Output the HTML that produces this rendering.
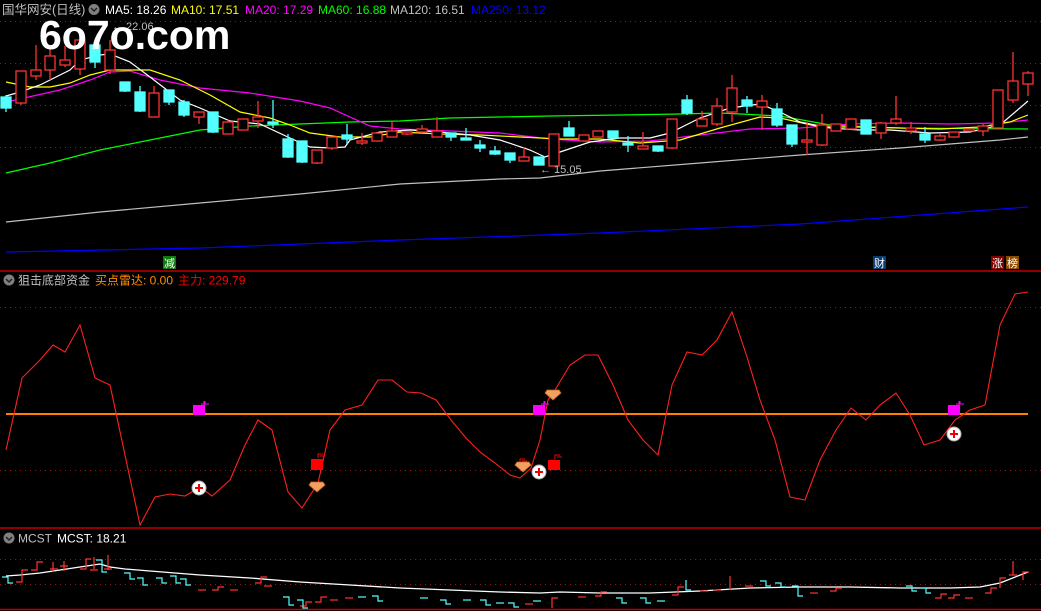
<!DOCTYPE html>
<html><head><meta charset="utf-8"><style>
html,body{margin:0;padding:0;background:#000;width:1041px;height:611px;overflow:hidden}
svg{display:block}
text{font-family:"Liberation Sans","Noto Sans CJK SC",sans-serif}
</style></head><body>
<svg width="1041" height="611" viewBox="0 0 1041 611" xmlns="http://www.w3.org/2000/svg">
<rect width="1041" height="611" fill="#000"/>
<g stroke="#8b1a1a" stroke-width="1" stroke-dasharray="1,4">
<line x1="0" y1="21.5" x2="1041" y2="21.5"/>
<line x1="0" y1="63.5" x2="1041" y2="63.5"/>
<line x1="0" y1="105.5" x2="1041" y2="105.5"/>
<line x1="0" y1="147.5" x2="1041" y2="147.5"/>
<line x1="0" y1="307.5" x2="1041" y2="307.5"/>
<line x1="0" y1="470.5" x2="1041" y2="470.5"/>
<line x1="0" y1="559.5" x2="1041" y2="559.5"/>
<line x1="0" y1="584.5" x2="1041" y2="584.5"/>
</g>
<g stroke="#c00000" stroke-width="1.5">
<line x1="0" y1="271" x2="1041" y2="271"/>
<line x1="0" y1="528" x2="1041" y2="528"/>
<line x1="0" y1="609.5" x2="1041" y2="609.5"/>
</g>
<text x="2" y="14" font-size="12.5" fill="#c0c0c0">国华网安(日线)</text>
<circle cx="94" cy="9.5" r="5.5" fill="#808080"/><path d="M91 8 L94 11 L97 8" stroke="#222" stroke-width="1.5" fill="none"/>
<text x="105" y="14" font-size="12" fill="#fff">MA5: 18.26</text>
<text x="171" y="14" font-size="12" fill="#ffff00">MA10: 17.51</text>
<text x="245" y="14" font-size="12" fill="#ff00ff">MA20: 17.29</text>
<text x="318" y="14" font-size="12" fill="#00ff00">MA60: 16.88</text>
<text x="390" y="14" font-size="12" fill="#c0c0c0">MA120: 16.51</text>
<text x="471" y="14" font-size="12" fill="#0000ff">MA250: 13.12</text>
<g fill="none" stroke-width="1.2">
<polyline stroke="#0000ff" points="6,252 200,248 400,240 600,233 800,224 1028,207"/>
<polyline stroke="#c0c0c0" points="6,222 100,212 200,203 300,194 400,184 500,179 540,178 600,171 700,163 800,155 900,148 1000,140 1028,137"/>
<polyline stroke="#00ff00" points="6,173 50,163 100,150 150,140 200,130 250,126 300,124 350,122 400,121 450,118 500,117 550,116 620,115 680,114 720,113 780,116 830,125 870,127 900,128 1028,129"/>
<polyline stroke="#ff00ff" points="6,102 60,90 90,80 110,72 130,71 160,80 200,88 250,93 300,101 330,108 370,126 400,129 450,131 500,133 550,139 600,142 650,141 700,135 750,129 800,128 850,124 900,123 950,124 1000,123 1028,120"/>
<polyline stroke="#ffff00" points="6,82 30,87 50,87 70,83 90,75 110,70 150,70 180,80 210,95 240,112 270,118 290,125 310,133 340,137 370,137 400,132 440,134 480,135 520,137 560,139 600,139 640,143 680,140 720,128 760,117 780,118 820,127 860,127 900,128 940,129 980,127 1010,122 1028,115"/>
<polyline stroke="#ffffff" points="6,96 20,92 40,85 70,70 80,60 100,55 110,54 130,62 150,77 180,100 200,108 230,121 260,124 290,138 310,147 330,148 345,147 350,140 380,132 410,130 440,132 470,135 500,140 530,150 545,157 560,152 590,142 620,138 650,138 670,133 700,118 730,108 760,104 780,112 800,122 830,128 860,130 890,130 930,133 970,132 1000,125 1028,101"/>
</g>
<g stroke-width="1.3">
<g stroke="#54ffff" fill="#54ffff">
<line x1="6" y1="95" x2="6" y2="112"/><rect x="1" y="97" width="10" height="11"/>
<line x1="95" y1="45" x2="95" y2="68"/><rect x="90" y="45" width="10" height="17"/>
<line x1="125" y1="82" x2="125" y2="92"/><rect x="120" y="82" width="10" height="9"/>
<line x1="140" y1="86" x2="140" y2="112"/><rect x="135" y="92" width="10" height="19"/>
<line x1="169" y1="90" x2="169" y2="105"/><rect x="164" y="90" width="10" height="12"/>
<line x1="184" y1="100" x2="184" y2="117"/><rect x="179" y="102" width="10" height="13"/>
<line x1="213" y1="112" x2="213" y2="133"/><rect x="208" y="112" width="10" height="20"/>
<line x1="273" y1="100" x2="273" y2="128"/><rect x="268" y="122" width="10" height="2"/>
<line x1="288" y1="134" x2="288" y2="158"/><rect x="283" y="139" width="10" height="18"/>
<line x1="302" y1="141" x2="302" y2="163"/><rect x="297" y="141" width="10" height="21"/>
<line x1="347" y1="124" x2="347" y2="144"/><rect x="342" y="135" width="10" height="4"/>
<line x1="451" y1="133" x2="451" y2="141"/><rect x="446" y="133" width="10" height="4"/>
<line x1="466" y1="128" x2="466" y2="140"/><rect x="461" y="138" width="10" height="2"/>
<line x1="480" y1="140" x2="480" y2="152"/><rect x="475" y="145" width="10" height="3"/>
<line x1="495" y1="146" x2="495" y2="155"/><rect x="490" y="151" width="10" height="3"/>
<line x1="510" y1="153" x2="510" y2="163"/><rect x="505" y="153" width="10" height="7"/>
<line x1="539" y1="157" x2="539" y2="165"/><rect x="534" y="157" width="10" height="8"/>
<line x1="569" y1="121" x2="569" y2="136"/><rect x="564" y="128" width="10" height="8"/>
<line x1="613" y1="131" x2="613" y2="138"/><rect x="608" y="131" width="10" height="7"/>
<line x1="628" y1="136" x2="628" y2="152"/><rect x="623" y="143" width="10" height="2"/>
<line x1="658" y1="146" x2="658" y2="152"/><rect x="653" y="146" width="10" height="5"/>
<line x1="687" y1="95" x2="687" y2="115"/><rect x="682" y="100" width="10" height="13"/>
<line x1="747" y1="96" x2="747" y2="113"/><rect x="742" y="100" width="10" height="6"/>
<line x1="777" y1="103" x2="777" y2="127"/><rect x="772" y="109" width="10" height="16"/>
<line x1="792" y1="125" x2="792" y2="147"/><rect x="787" y="125" width="10" height="19"/>
<line x1="866" y1="120" x2="866" y2="134"/><rect x="861" y="120" width="10" height="14"/>
<line x1="925" y1="127" x2="925" y2="143"/><rect x="920" y="134" width="10" height="6"/>
</g>
<g stroke="#ff3232" fill="#000">
<line x1="21" y1="71" x2="21" y2="105"/><rect x="16" y="71" width="10" height="32"/>
<line x1="36" y1="45" x2="36" y2="80"/><rect x="31" y="70" width="10" height="6"/>
<line x1="50" y1="45" x2="50" y2="80"/><rect x="45" y="56" width="10" height="14"/>
<line x1="65" y1="46" x2="65" y2="67"/><rect x="60" y="60" width="10" height="5"/>
<line x1="80" y1="40" x2="80" y2="75"/><rect x="75" y="40" width="10" height="29"/>
<line x1="110" y1="40" x2="110" y2="74"/><rect x="105" y="50" width="10" height="20"/>
<line x1="154" y1="86" x2="154" y2="117"/><rect x="149" y="93" width="10" height="24"/>
<line x1="199" y1="112" x2="199" y2="124"/><rect x="194" y="112" width="10" height="5"/>
<line x1="228" y1="120" x2="228" y2="134"/><rect x="223" y="122" width="10" height="12"/>
<line x1="243" y1="119" x2="243" y2="130"/><rect x="238" y="119" width="10" height="11"/>
<line x1="258" y1="101" x2="258" y2="128"/><rect x="253" y="117" width="10" height="4"/>
<line x1="317" y1="150" x2="317" y2="164"/><rect x="312" y="150" width="10" height="13"/>
<line x1="332" y1="137" x2="332" y2="150"/><rect x="327" y="137" width="10" height="11"/>
<line x1="362" y1="133" x2="362" y2="145"/><rect x="357" y="141" width="10" height="2"/>
<line x1="377" y1="133" x2="377" y2="141"/><rect x="372" y="133" width="10" height="8"/>
<line x1="392" y1="122" x2="392" y2="137"/><rect x="387" y="131" width="10" height="6"/>
<line x1="407" y1="132" x2="407" y2="135"/><rect x="402" y="132" width="10" height="2"/>
<line x1="422" y1="125" x2="422" y2="133"/><rect x="417" y="129" width="10" height="3"/>
<line x1="437" y1="117" x2="437" y2="137"/><rect x="432" y="131" width="10" height="6"/>
<line x1="524" y1="147" x2="524" y2="161"/><rect x="519" y="157" width="10" height="4"/>
<line x1="554" y1="134" x2="554" y2="166"/><rect x="549" y="134" width="10" height="32"/>
<line x1="584" y1="135" x2="584" y2="141"/><rect x="579" y="135" width="10" height="6"/>
<line x1="598" y1="131" x2="598" y2="137"/><rect x="593" y="131" width="10" height="6"/>
<line x1="643" y1="132" x2="643" y2="149"/><rect x="638" y="146" width="10" height="3"/>
<line x1="672" y1="119" x2="672" y2="149"/><rect x="667" y="119" width="10" height="29"/>
<line x1="702" y1="111" x2="702" y2="126"/><rect x="697" y="119" width="10" height="7"/>
<line x1="717" y1="98" x2="717" y2="126"/><rect x="712" y="106" width="10" height="18"/>
<line x1="732" y1="75" x2="732" y2="122"/><rect x="727" y="88" width="10" height="24"/>
<line x1="762" y1="95" x2="762" y2="130"/><rect x="757" y="101" width="10" height="6"/>
<line x1="807" y1="122" x2="807" y2="155"/><rect x="802" y="140" width="10" height="2"/>
<line x1="822" y1="114" x2="822" y2="146"/><rect x="817" y="125" width="10" height="20"/>
<line x1="836" y1="124" x2="836" y2="131"/><rect x="831" y="124" width="10" height="7"/>
<line x1="851" y1="119" x2="851" y2="129"/><rect x="846" y="119" width="10" height="10"/>
<line x1="881" y1="122" x2="881" y2="139"/><rect x="876" y="123" width="10" height="10"/>
<line x1="896" y1="96" x2="896" y2="125"/><rect x="891" y="119" width="10" height="4"/>
<line x1="911" y1="122" x2="911" y2="134"/><rect x="906" y="128" width="10" height="3"/>
<line x1="940" y1="133" x2="940" y2="141"/><rect x="935" y="136" width="10" height="4"/>
<line x1="954" y1="132" x2="954" y2="137"/><rect x="949" y="132" width="10" height="5"/>
<line x1="969" y1="129" x2="969" y2="131"/><rect x="964" y="129" width="10" height="2"/>
<line x1="983" y1="124" x2="983" y2="136"/><rect x="978" y="126" width="10" height="5"/>
<line x1="998" y1="90" x2="998" y2="128"/><rect x="993" y="90" width="10" height="38"/>
<line x1="1013" y1="52" x2="1013" y2="103"/><rect x="1008" y="81" width="10" height="19"/>
<line x1="1028" y1="71" x2="1028" y2="96"/><rect x="1023" y="73" width="10" height="11"/>
</g>
</g>
<text x="112" y="30" font-size="11" fill="#c0c0c0">← 22.06</text>
<text x="540" y="173" font-size="11" fill="#c0c0c0">← 15.05</text>
<text x="39" y="49" font-size="41" font-weight="bold" fill="#fff">6o7o.com</text>
<rect x="163" y="256" width="13" height="13" fill="#0a7a0a"/><text x="164" y="267" font-size="11" fill="#fff">减</text>
<rect x="873" y="256" width="13" height="13" fill="#0a3a70"/><text x="874" y="267" font-size="11" fill="#fff">财</text>
<rect x="991" y="256" width="13" height="13" fill="#800000"/><text x="992" y="267" font-size="11" fill="#fff">涨</text>
<rect x="1006" y="256" width="13" height="13" fill="#8a4a00"/><text x="1007" y="267" font-size="11" fill="#fff">榜</text>
<circle cx="9" cy="280" r="5.5" fill="#808080"/><path d="M6 279 L9 282 L12 279" stroke="#222" stroke-width="1.5" fill="none"/>
<text x="18" y="284.5" font-size="12" fill="#c0c0c0">狙击底部资金</text>
<text x="95" y="284.5" font-size="12" fill="#ff8c00">买点雷达: 0.00</text>
<text x="178" y="284.5" font-size="12" fill="#ff0000">主力: 229.79</text>
<line x1="6" y1="414" x2="1028" y2="414" stroke="#ff8000" stroke-width="2"/>
<polyline fill="none" stroke="#ff2020" stroke-width="1.1" points="6,450 22,378 40,360 53,345 65,352 80,325 95,378 110,385 125,455 140,525 155,497 170,494 185,496 200,487 212,496 230,480 245,445 258,420 272,430 288,492 302,508 318,483 330,430 345,410 362,405 378,380 392,380 407,392 421,393 436,400 451,420 466,438 480,452 495,463 510,475 520,478 531,468 540,440 548,400 555,390 570,365 585,355 598,355 613,385 628,420 643,440 658,455 672,385 687,352 702,355 717,340 732,312 747,357 760,400 775,440 790,497 805,500 820,460 836,430 851,408 866,420 880,405 896,393 910,415 924,445 940,440 955,420 970,410 985,405 1000,325 1015,294 1028,292"/>
<g fill="#ff00ff"><rect x="193" y="405" width="12" height="10"/><rect x="533" y="405" width="12" height="10"/><rect x="948" y="405" width="12" height="10"/></g>
<g stroke="#ff00ff" stroke-width="1" fill="none"><path d="M201 404h4v-3M204 401v8M201 404h8"/><path d="M541 404h4v-3M544 401v8M541 404h8"/><path d="M956 404h4v-3M959 401v8M956 404h8"/></g>
<g fill="#ff0000"><rect x="311" y="459" width="12" height="11"/><rect x="548" y="460" width="12" height="10"/></g>
<g stroke="#ff0000" stroke-width="1" fill="none"><path d="M318 458v-4h5M320 456h5"/><path d="M555 459v-4h5M557 457h5"/><path d="M520 463v-4h5M522 461h5"/></g>
<circle cx="199" cy="488" r="7" fill="#fff" stroke="#aaa"/><path d="M199 484v8M195 488h8" stroke="#e00" stroke-width="2"/>
<circle cx="539" cy="472" r="7" fill="#fff" stroke="#aaa"/><path d="M539 468v8M535 472h8" stroke="#e00" stroke-width="2"/>
<circle cx="954" cy="434" r="7" fill="#fff" stroke="#aaa"/><path d="M954 430v8M950 434h8" stroke="#e00" stroke-width="2"/>
<g fill="#f0a060" stroke="#c86020" stroke-width="0.8">
<path d="M311 482h12l2 3-8 7-8-7z"/>
<path d="M517 462h12l2 3-8 7-8-7z"/>
<path d="M547 390h12l2 3-8 7-8-7z"/>
</g>
<circle cx="9" cy="538" r="5.5" fill="#808080"/><path d="M6 537 L9 540 L12 537" stroke="#222" stroke-width="1.5" fill="none"/>
<text x="18" y="542.5" font-size="12" fill="#c0c0c0">MCST</text>
<text x="57" y="542.5" font-size="12" fill="#fff">MCST: 18.21</text>
<polyline fill="none" stroke="#fff" stroke-width="1.3" points="6,576 20,575 40,573 60,570 80,567 100,564 110,567 125,569 150,571 200,575 250,578 300,582 350,585 400,588 450,590 500,592 540,593 560,592 600,593 650,593 700,591 750,588 800,587 850,587 900,588 950,588 980,587 1000,583 1028,572"/>
<g fill="none" stroke-width="1.2" stroke="#ff3232">
<path d="M16 582h6v-12h6"/><path d="M31 570h6v-8h6"/><path d="M50 569h8M53 562v10"/><path d="M60 566h8M64 561v10"/><path d="M80 569h6v-10h5"/><path d="M94 557v12M90 570h8"/><path d="M108 555v15M104 569h8"/>
<path d="M198 590h8"/><path d="M212 590h6v-3h6"/><path d="M230 590h8"/><path d="M255 583h6v-6h6"/><path d="M264 586h8"/>
<path d="M300 606h6v-4h6"/><path d="M315 602h6v-5h6"/><path d="M330 600h8"/><path d="M345 598h8"/>
<path d="M525 604h8"/><path d="M552 608v-10h6"/><path d="M578 597h8"/><path d="M595 596h6v-4h6"/>
<path d="M672 595h6v-8h6"/><path d="M700 591h8"/><path d="M713 590h8"/><path d="M730 590v-14"/><path d="M745 586h8"/>
<path d="M810 593h8"/><path d="M830 591h6v-3h6"/><path d="M935 598h6v-4h6"/><path d="M948 598h6v-3h6"/><path d="M965 598h8"/><path d="M985 593h6v-5h6"/><path d="M1000 588v-10h6"/><path d="M1013 575v-14M1009 575h8"/><path d="M1023 580v-8h6"/>
</g>
<g fill="none" stroke-width="1.2" stroke="#54ffff">
<path d="M2 577h6v6h5"/><path d="M96 560h6v12h5"/><path d="M124 573h6v6h5"/><path d="M137 578h6v7h5"/><path d="M156 578h6v5h5"/><path d="M170 576h6v7h5"/><path d="M180 579h6v6h5"/>
<path d="M283 597h6v8h5"/><path d="M297 600h6v8h5"/><path d="M358 597h8"/><path d="M372 596h6v5h5"/><path d="M420 598h8"/><path d="M440 600h6v4h5"/><path d="M463 600h8"/><path d="M480 600h6v5h5"/><path d="M496 603h8"/><path d="M508 603h6v4h5"/><path d="M533 601h8"/>
<path d="M616 598h6v5h5"/><path d="M640 598h6v5h5"/><path d="M657 601h8"/><path d="M686 580v10h5"/><path d="M760 581h6v5h5"/><path d="M775 583h6v4h5"/><path d="M792 586h6v10h5"/><path d="M906 586h6v5h5"/><path d="M920 588h6v5h5"/>
</g>
</svg>
</body></html>
